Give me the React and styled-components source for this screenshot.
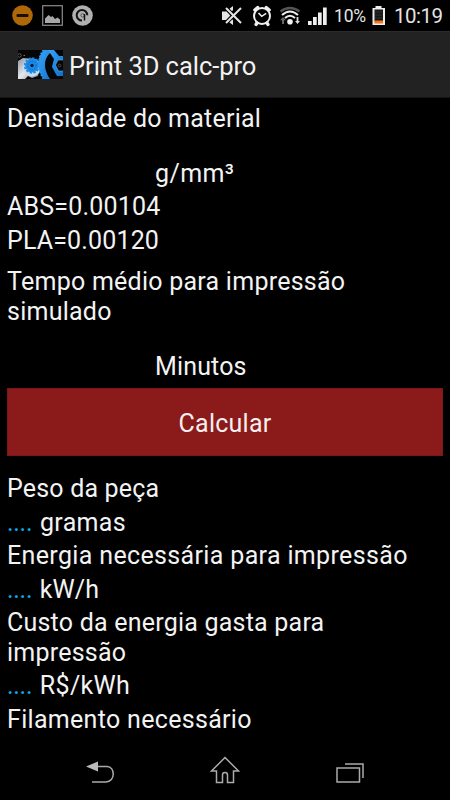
import React from 'react';
import styled, { createGlobalStyle } from 'styled-components';

const GlobalStyle = createGlobalStyle`
  * {
    box-sizing: border-box;
  }

  body {
    margin: 0;
    background: #000;
    color: #f3f3f3;
    font-family: Roboto, sans-serif;
  }
`;

const Screen = styled.div`
  display: flex;
  flex-direction: column;
  width: 450px;
  height: 800px;
  overflow: hidden;
  background: #000;
`;

const StatusBar = styled.header`
  display: flex;
  justify-content: space-between;
  height: 31px;
`;

const StatusText = styled.span`
  width: ${({ $width }) => $width}px;
  font-size: ${({ $size }) => $size}px;
  line-height: 32px;
  letter-spacing: ${({ $spacing }) => $spacing || 0}px;
  white-space: nowrap;
  color: #e4e4e4;
`;

const StatusRight = styled.div`
  display: flex;
  width: 230px;
`;

const ActionBar = styled.div`
  display: flex;
  align-items: center;
  gap: 6px;
  height: 67px;
  padding-left: 18px;
  background: #222;
  border-top: 1px solid #2c2c2c;
  border-bottom: 1px solid #151515;
`;

const Title = styled.h1`
  margin: 0;
  padding-top: 2px;
  font-size: 25.5px;
  font-weight: 400;
  line-height: 30px;
  letter-spacing: -0.05px;
  white-space: nowrap;
`;

const Content = styled.main`
  flex: 1;
  padding: 5.8px 7px 0;
`;

const Line = styled.p`
  margin: ${({ $gap }) => ($gap === undefined ? 4.2 : $gap)}px 0 0;
  padding-left: ${({ $indent }) => $indent || 0}px;
  font-size: 25px;
  line-height: 29.4px;
  letter-spacing: ${({ $spacing }) => $spacing || 0}px;
  white-space: pre;
`;

const Pending = styled.span`
  margin-right: 1.2px;
  color: #00b4f4;
  letter-spacing: -0.3px;
`;

const Button = styled.button`
  display: block;
  width: 436px;
  height: 68px;
  margin: 7.3px 0 17.8px;
  padding: 3px 0 0;
  border: 1px solid #7b1717;
  background: #8b1a1a;
  color: #f5eeee;
  font-family: inherit;
  font-size: 25px;
  line-height: 30px;
  letter-spacing: 0.25px;
`;

const NavBar = styled.nav`
  display: flex;
  height: 59px;
`;

const NotificationIcons = () => (
  <svg width="100" height="31" viewBox="0 0 100 31">
    <circle cx="22.5" cy="15.5" r="10.3" fill="#ae6808" />
    <rect x="16.5" y="14" width="12" height="3" rx="1" fill="#1a0f00" />
    <rect x="42.7" y="5.7" width="19.6" height="19.6" fill="none" stroke="#8c8c8c" strokeWidth="1.2" />
    <path d="M45 23v-4.5l3.5-3.5 2.5 2 1.5-1 2.5 3 2.5-1.5 2.5 2v3.5z" fill="#a8a8a8" />
    <circle cx="82.5" cy="15.5" r="10.3" fill="#b0b0b0" />
    <path d="M82 20.5a5.3 5.3 0 1 1 5.300-5.300" fill="none" stroke="#111" strokeWidth="2" />
    <circle cx="82.6" cy="15.300" r="1.700" fill="none" stroke="#555" strokeWidth="1" />
    <path d="M84.500 14v6.500" stroke="#111" strokeWidth="1.500" />
  </svg>
);

const SystemIcons = () => (
  <svg width="114" height="31" viewBox="220 0 114 31">
    <path d="M222 11.5h4l7-5.5v4l-3.5 4 3.5 6.5V25l-7-5h-4z" fill="#e5e5e5" />
    <path d="M225.5 7.5l15.5 16M241 7.5l-15.5 16" stroke="#000" strokeWidth="4" />
    <path d="M226 8l15 15M241 8l-15 15" stroke="#e5e5e5" strokeWidth="2" />

    <circle cx="262" cy="16" r="8" fill="none" stroke="#f0f0f0" strokeWidth="2" />
    <path d="M254.8 10l3-2.5M266.2 7.5l3 2.5M257 23l-1 1.5M267 23l1 1.5" stroke="#f0f0f0" strokeWidth="3.2" strokeLinecap="round" />
    <path d="M258.5 13l3.2 3.3 4.5-3" fill="none" stroke="#f0f0f0" strokeWidth="1.6" />

    <path d="M280.5 11.5q9.5-7 19 0" fill="none" stroke="#555" strokeWidth="2.2" />
    <path d="M282 15q8-7 16 0" fill="none" stroke="#eee" strokeWidth="2.1" />
    <path d="M285 18q5-4.5 10 0" fill="none" stroke="#eee" strokeWidth="2" />
    <circle cx="290" cy="21.8" r="2.8" fill="#f3f3f3" />
    <path d="M283 17l3 3.3h-2v3.7h-2v-3.7h-2z" fill="#666" />
    <path d="M297.5 24l-2.5-3h1.6v-4h1.8v4h1.6z" fill="#ddd" />

    <path d="M308 21h3.7v4H308zM313 17h3.7v8H313zM318 12.5h3.7V25H318zM323 7.5h3.7V25H323z" fill="#eee" />
  </svg>
);

const Battery = () => (
  <svg width="26" height="31" viewBox="368 0 26 31">
    <path d="M375.5 6h6v2h3.5v17h-12.5V8h3z" fill="#eee" />
    <path d="M374.5 9.5h8.500v12h-8.500z" fill="#161616" />
    <path d="M375 12h7.5M375 15h7.5M375 18h7.5" stroke="#303030" />
    <path d="M374.5 20.5h8.5v3h-8.5z" fill="#f5751c" />
  </svg>
);

const AppIcon = () => (
  <svg width="45" height="29" viewBox="0 0 45 29">
    <defs>
      <linearGradient id="metal" x2="1" y2="1">
        <stop stopColor="#8f969e" />
        <stop offset=".5" stopColor="#e5e9ed" />
        <stop offset="1" stopColor="#6e757c" />
      </linearGradient>
      <linearGradient id="blue" x2="1" y2="1">
        <stop stopColor="#3ba4f5" />
        <stop offset="1" stopColor="#0d6fd0" />
      </linearGradient>
      <clipPath id="frame">
        <path d="M0 0h45v29H0z" />
      </clipPath>
    </defs>
    <g clipPath="url(#frame)">
      <path d="M0 0h45v29H0z" fill="#050608" />
      <circle cx="1.5" cy="5.5" r="1.8" fill="none" stroke="#777" strokeWidth=".7" />
      <path d="M5.5 5.5h1.5" stroke="#b16535" />
      <path d="M0 11l5-3 9 1 8 8-2 9-6 2-4-2-3 3H0z" fill="url(#metal)" />
      <circle cx="14" cy="17.5" r="9" fill="#cbdcec" />
      <circle cx="14" cy="15.5" r="6.9" fill="#1b8ae8" />
      <circle cx="14" cy="15.5" r="7.4" fill="none" stroke="#1b8ae8" strokeWidth="1.6" strokeDasharray="2.4 1.47" />
      <circle cx="14" cy="15.5" r="4.2" fill="none" stroke="#0d5cae" strokeWidth=".8" strokeDasharray="1.5 1.2" />
      <circle cx="14" cy="15.5" r="1.7" fill="#061c33" />
      <path d="M26 0h10l-5 4c-6 7-5 16 1 25h-6C19 22 18 7 26 0z" fill="url(#blue)" />
      <path d="M25.5 0c-6 7-6 20 0 29" fill="none" stroke="#2796ef" strokeWidth="1.8" strokeDasharray="1.8 1.4" />
      <path d="M30 0h6l5 6h4v4h-5l-2.5 5 3 6H45v5h-6l-5-9 2-8z" fill="url(#blue)" />
      <path d="M45 10h-5l-2.5 5 3 6H45" fill="none" stroke="#58b3f6" strokeWidth=".6" />
      <circle cx="41.500" cy="15.500" r="1.400" fill="none" stroke="#51453f" />
    </g>
  </svg>
);

const NavIcons = () => (
  <svg width="450" height="59" viewBox="0 741 450 59" fill="none" stroke="#aaa" strokeWidth="1.5">
    <path d="M96 766.5h11c8.500 0 8.500 15.500-1 15.500H92" />
    <path d="M86 766.5l12-5v10z" fill="#bbb" stroke="none" />
    <path d="M225 757.5l13.500 13.500h-5v11.500h-6V775q0-2.500-2.500-2.500t-2.500 2.500v7.500h-6V771h-5z" />
    <path d="M337 768h22.500v14H337zM345 764h18v14" />
  </svg>
);

const App = () => (
  <Screen>
    <GlobalStyle />
    <StatusBar>
      <NotificationIcons />
      <StatusRight>
        <SystemIcons />
        <StatusText $size={17.5} $width={34} $spacing={-0.15}>10%</StatusText>
        <Battery />
        <StatusText $size={20.5} $width={56} $spacing={-0.5}>10:19</StatusText>
      </StatusRight>
    </StatusBar>
    <ActionBar>
      <AppIcon />
      <Title>Print 3D calc-pro</Title>
    </ActionBar>
    <Content>
      <Line $gap={0} $spacing={0.22}>Densidade do material</Line>
      <Line $gap={25.5} $indent={148} $spacing={0.4}>g/mm³</Line>
      <Line $spacing={0.2}>ABS=0.00104</Line>
      <Line $spacing={0.15}>PLA=0.00120</Line>
      <Line $gap={11.9} $spacing={0.25}>{'Tempo médio para impressão\nsimulado'}</Line>
      <Line $gap={25.5} $indent={148} $spacing={0.15}>Minutos</Line>
      <Button type="button">Calcular</Button>
      <Line $gap={0} $spacing={0.18}>Peso da peça</Line>
      <Line $spacing={0.35}><Pending>....</Pending> gramas</Line>
      <Line $spacing={0.35}>Energia necessária para impressão</Line>
      <Line $spacing={0.1}><Pending>....</Pending> kW/h</Line>
      <Line $spacing={0.22}>{'Custo da energia gasta para\nimpressão'}</Line>
      <Line $spacing={0.3}><Pending>....</Pending> R$/kWh</Line>
      <Line $spacing={0.31}>Filamento necessário</Line>
    </Content>
    <NavBar>
      <NavIcons />
    </NavBar>
  </Screen>
);

export default App;
